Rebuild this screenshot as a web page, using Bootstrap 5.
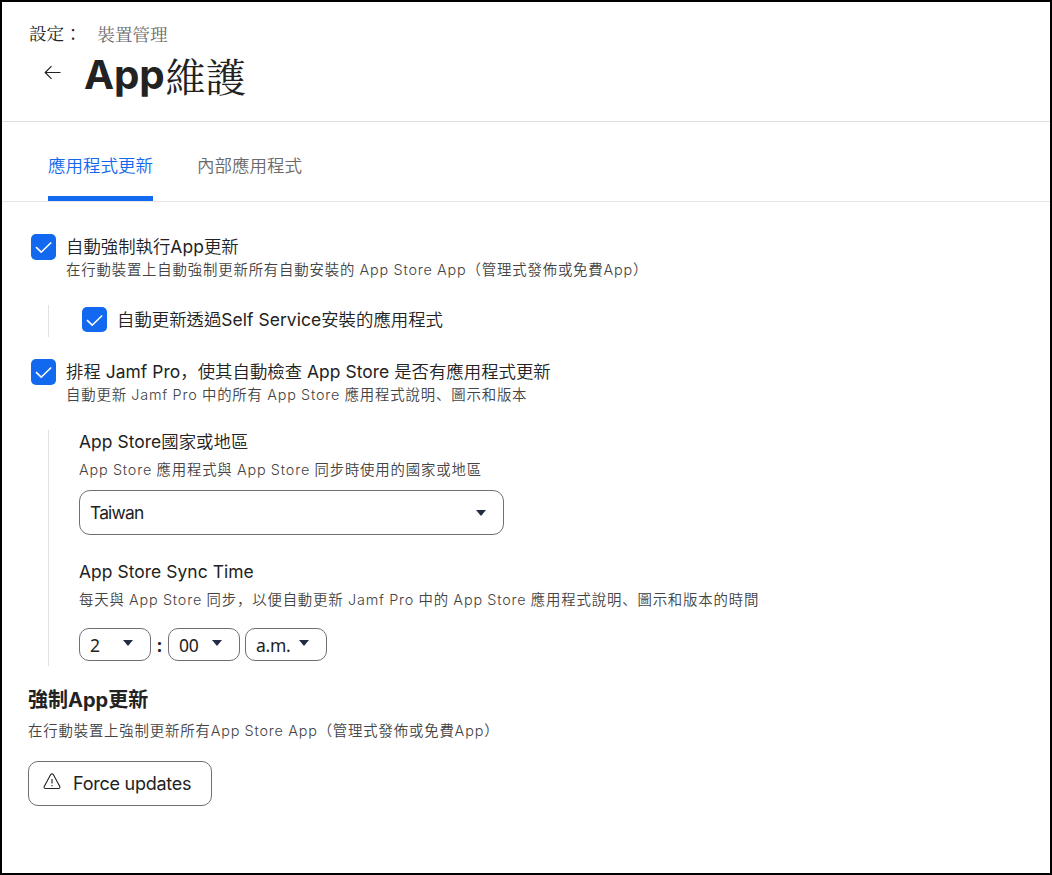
<!DOCTYPE html>
<html lang="zh-Hant">
<head>
<meta charset="utf-8">
<meta name="viewport" content="width=device-width, initial-scale=1">
<title>App維護</title>
<link href="https://cdn.jsdelivr.net/npm/bootstrap@5.3.0/dist/css/bootstrap.min.css" rel="stylesheet">
<style>
  body { font-family: Inter, "Noto Sans CJK TC", sans-serif; color: #222; font-size: 17.4px; line-height: 24px; overflow: hidden; }
  .app-frame { height: 875px; border: 2px solid #000; background: #fff; }
  .page-head { height: 120px; border-bottom: 1px solid #e0e0e0; padding: 20px 27px 0; }
  .serif-tc { font-family: Inter, "Noto Serif CJK TC", "Noto Serif CJK SC", "AR PL UMing TW", "Noto Sans CJK TC", serif; }
  .crumbs { font-size: 17.6px; line-height: 24px; gap: 15.500px; }
  .crumb-link { color: #6b6b6b; padding-top: 1px; }
  .back-icon { margin: 0 23px 9px 15px; }
  .page-title { font-size: 40.3px; line-height: 50px; font-weight: 700; letter-spacing: -.1px; display: flex; }
  .page-title > span:first-child { margin-top: -1px; }
  .page-title .serif-tc { font-weight: 400; padding: 2px 0 0 1px; }
  .tab-strip { height: 80px; border-bottom: 1px solid #e6e6e6; padding-left: 46px; gap: 44px; flex-wrap: nowrap; }
  .tab-strip .nav-link { padding: 31.500px 0 0; height: 79px; font-size: 17.5px; color: #6b6b6b; font-weight: 350; border-bottom: 5px solid transparent; }
  .tab-strip .nav-link.active { color: #1268ee; border-color: #1268ee; }
  .settings { padding: 32px 26px 0; }
  .tick { width: 25px; height: 26px; border-radius: 5px; background: #1268ee; flex: none; }
  .branch .tick { height: 25px; }
  .opt-row { gap: 10px; padding-left: 3px; }
  .opt-row.inner { padding-left: 33px; height: 29px; }
  .opt-title { line-height: 25px; font-weight: 350; font-size: 17.4px; }
  .hint { font-size: 14.4px; letter-spacing: .83px; word-spacing: -.5px; line-height: 21px; color: #444; font-weight: 340; white-space: nowrap; }
  .latin { font-weight: 370; letter-spacing: .07px; }
  .branch { border-left: 1px solid #e2e2e2; margin-left: 20px; }
  .branch-sm { height: 32px; margin-top: 25px; }
  .branch-lg { display: flow-root; height: 236px; margin-top: 25px; padding-left: 30px; }
  .branch-lg .hint { margin: 5px 0 0; height: 30px; }
  .branch-lg > .opt-title:first-child { margin-top: -1px; }
  .second-opt { margin-top: 22px; }
  .pick { border: 1px solid #6f6f76; border-radius: 10px; background: #fff; padding: 0 10px; }
  .pick-lg { width: 425px; height: 45px; margin-top: 1px; border-radius: 11px; padding-right: 17px; letter-spacing: -.8px; }
  .sync-title { margin-top: 24px; }
  .pick-sm { width: 72px; height: 33px; padding-right: 17px; font-size: 17.5px; letter-spacing: -.3px; }
  .pick-sm svg { margin-bottom: 4px; }
  .pick-ampm { width: 82px; margin-left: 5px; }
  .time-row { margin-top: 9px; }
  .time-sep { width: 17px; text-align: center; font-weight: 700; }
  .noto { font-family: "Noto Sans", sans-serif; }
  .force-head { font-size: 20px; line-height: 24px; margin: 22px 0 0; }
  .force-hint { margin-top: 8px; }
  .force-btn { width: 184px; height: 45px; border: 1px solid #6f6f76; border-radius: 10px; background: #fff; color: #222; font-size: 18px; letter-spacing: -.25px; font-weight: 370; padding: 0 14px; gap: 12px; margin-top: 20px; }
  .force-btn svg { margin-bottom: 5px; }
  svg { display: block; flex: none; }
</style>
</head>
<body>
<div class="app-frame">
  <header class="page-head">
    <div class="crumbs serif-tc d-flex"><span>設定：</span><span class="crumb-link">裝置管理</span></div>
    <div class="d-flex align-items-center mt-1">
      <svg class="back-icon" width="17" height="15" viewBox="0 0 17 15" fill="none" stroke="#222" stroke-width="1.2"><path d="M16.5 7.5H1M7.5 1.2 1.2 7.5l6.3 6.3"/></svg>
      <h1 class="page-title mb-0"><span>App</span><span class="serif-tc">維護</span></h1>
    </div>
  </header>
  <nav class="nav tab-strip">
    <a class="nav-link active" href="#">應用程式更新</a>
    <a class="nav-link" href="#">內部應用程式</a>
  </nav>
  <main class="settings">
    <div class="d-flex opt-row">
      <div class="tick"><svg width="25" height="25" fill="none" stroke="#fff" stroke-width="1.6"><path d="m5 13.2 5.2 5L20.2 8.500"/></svg></div>
      <div><div class="opt-title">自動強制執行<span class="latin">App</span>更新</div>
      <div class="hint">在行動裝置上自動強制更新所有自動安裝的 App Store App（管理式發佈或免費App）</div></div>
    </div>
    <div class="branch branch-sm">
      <div class="d-flex opt-row inner align-items-center">
        <div class="tick"><svg width="25" height="25" fill="none" stroke="#fff" stroke-width="1.6"><path d="m5 13.2 5.2 5L20.2 8.500"/></svg></div>
        <div class="opt-title">自動更新透過<span class="latin">Self Service</span>安裝的應用程式</div>
      </div>
    </div>
    <div class="d-flex opt-row second-opt">
      <div class="tick"><svg width="25" height="25" fill="none" stroke="#fff" stroke-width="1.6"><path d="m5 13.2 5.2 5L20.2 8.500"/></svg></div>
      <div><div class="opt-title">排程 <span class="latin">Jamf Pro</span><span lang="zh-Hans">，</span>使其自動檢查 <span class="latin">App Store</span> 是否有應用程式更新</div>
      <div class="hint">自動更新 Jamf Pro 中的所有 App Store 應用程式說明<span lang="zh-Hans">、</span>圖示和版本</div></div>
    </div>
    <div class="branch branch-lg">
      <div class="opt-title"><span class="latin">App Store</span>國家或地區</div>
      <div class="hint">App Store 應用程式與 App Store 同步時使用的國家或地區</div>
      <div class="pick pick-lg d-flex align-items-center justify-content-between"><span>Taiwan</span><svg width="10" height="6"><path d="M0 0h10L5 6z" fill="#242c45"/></svg></div>
      <div class="opt-title sync-title latin">App Store Sync Time</div>
      <div class="hint">每天與 App Store 同步<span lang="zh-Hans">，</span>以便自動更新 Jamf Pro 中的 App Store 應用程式說明<span lang="zh-Hans">、</span>圖示和版本的時間</div>
      <div class="time-row d-flex align-items-center">
        <div class="pick pick-sm noto d-flex align-items-center justify-content-between">2<svg width="10" height="6"><path d="M0 0h10L5 6z" fill="#242c45"/></svg></div>
        <span class="time-sep noto">:</span>
        <div class="pick pick-sm noto d-flex align-items-center justify-content-between">00<svg width="10" height="6"><path d="M0 0h10L5 6z" fill="#242c45"/></svg></div>
        <div class="pick pick-sm pick-ampm noto d-flex align-items-center justify-content-between">a.m.<svg width="10" height="6"><path d="M0 0h10L5 6z" fill="#242c45"/></svg></div>
      </div>
    </div>
    <h2 class="force-head fw-bold">強制App更新</h2>
    <div class="hint force-hint">在行動裝置上強制更新所有App Store App（管理式發佈或免費App）</div>
    <button class="force-btn d-flex align-items-center"><svg width="18" height="17" fill="none" stroke="#222" stroke-width="1.1" stroke-linejoin="round"><path d="M7.700 1.600Q9 0 10.300 1.600L16.800 13.500Q17.300 15.500 15.500 15.500H2.500Q.7 15.500 1.200 13.500ZM9 6v4.500M9 12v1.200"/></svg>Force updates</button>
  </main>
</div>
<script src="https://cdn.jsdelivr.net/npm/bootstrap@5.3.0/dist/js/bootstrap.bundle.min.js"></script>
</body>
</html>
